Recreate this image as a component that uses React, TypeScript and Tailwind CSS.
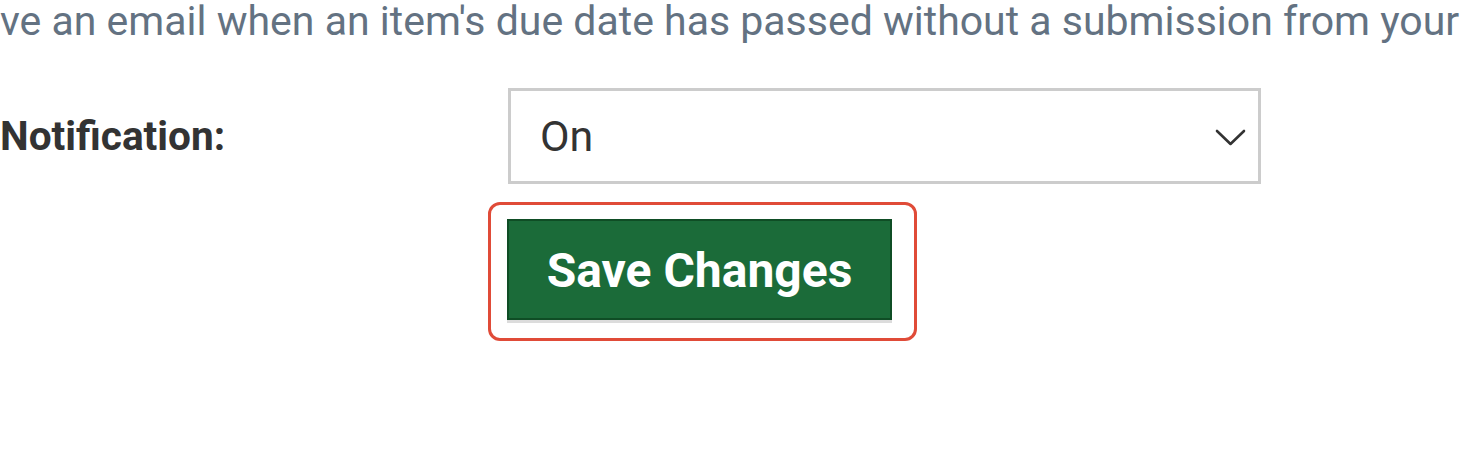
export default function App() {
  return (
    <div className="h-[466px] w-[1468px] overflow-hidden bg-white font-['Roboto',sans-serif]">
      <p className="whitespace-nowrap text-[41px] leading-[42px] text-[#637282]">
        ve an email when an item's due date has passed without a submission from your
      </p>

      <div className="mt-[46px] flex items-center">
        <label className="w-[508px] text-[40.6px] font-bold text-[#333333]">Notification:</label>
        <div className="flex h-[96px] w-[753px] items-center justify-between border-[3px] border-[#cccccc] pl-[29px] pr-[12px]">
          <span className="text-[43px] text-[#333333]">On</span>
          <svg width="31" height="19" viewBox="0 0 31 19" fill="none" className="mt-[2px]">
            <polyline
              points="2,3 15.5,16 29,3"
              stroke="#333333"
              strokeWidth="2.6"
              strokeLinecap="round"
              strokeLinejoin="round"
            />
          </svg>
        </div>
      </div>

      <div className="ml-[488px] mt-[18px] inline-flex rounded-[12px] border-[3px] border-[#e04b38] pb-[18px] pl-[16px] pr-[22px] pt-[14px]">
        <button className="h-[101px] w-[385px] border-2 border-[#0f4d25] bg-[#1b6b39] pt-[3px] text-[48px] font-bold text-white shadow-[0_3px_0_#dcdcdc]">
          Save Changes
        </button>
      </div>
    </div>
  );
}
